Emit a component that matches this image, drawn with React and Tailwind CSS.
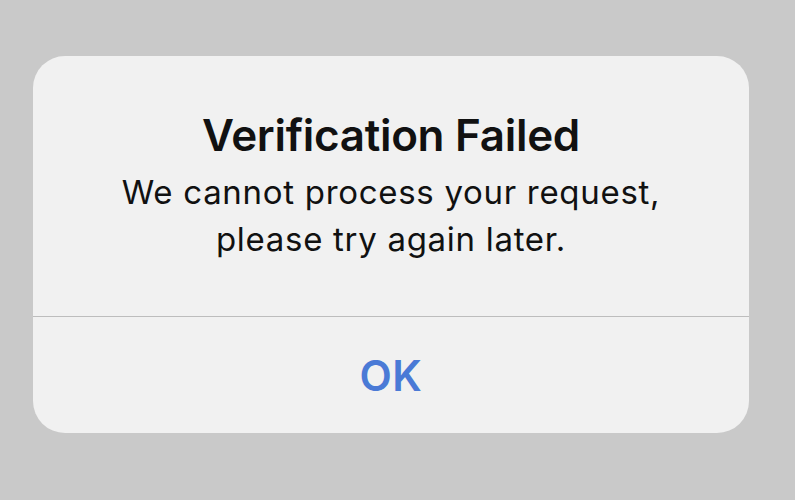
export default function App() {
  return (
    <div className="w-[795px] h-[500px] bg-[#c9c9c9] pt-[56px] pl-[33px]" style={{ fontFamily: "Inter, 'Noto Sans', sans-serif" }}>
      <div className="w-[716px] h-[377px] bg-[#f1f1f1] rounded-[32px] flex flex-col overflow-hidden">
        <div className="h-[260px] flex flex-col items-center pt-[53px]">
          <h1 className="text-[44px] leading-[52px] font-semibold text-[#111] tracking-[-0.3px]">
            Verification Failed
          </h1>
          <p className="mt-[8px] text-[33px] leading-[47px] text-[#111] text-center tracking-[0.7px]">
            We cannot process your request,
            <br />
            please try again later.
          </p>
        </div>
        <div className="h-px bg-[#bdbdbd]" />
        <button className="flex-1 flex items-center justify-center text-[42px] font-semibold text-[#4a7ad6] tracking-[0.5px]">
          OK
        </button>
      </div>
    </div>
  );
}
